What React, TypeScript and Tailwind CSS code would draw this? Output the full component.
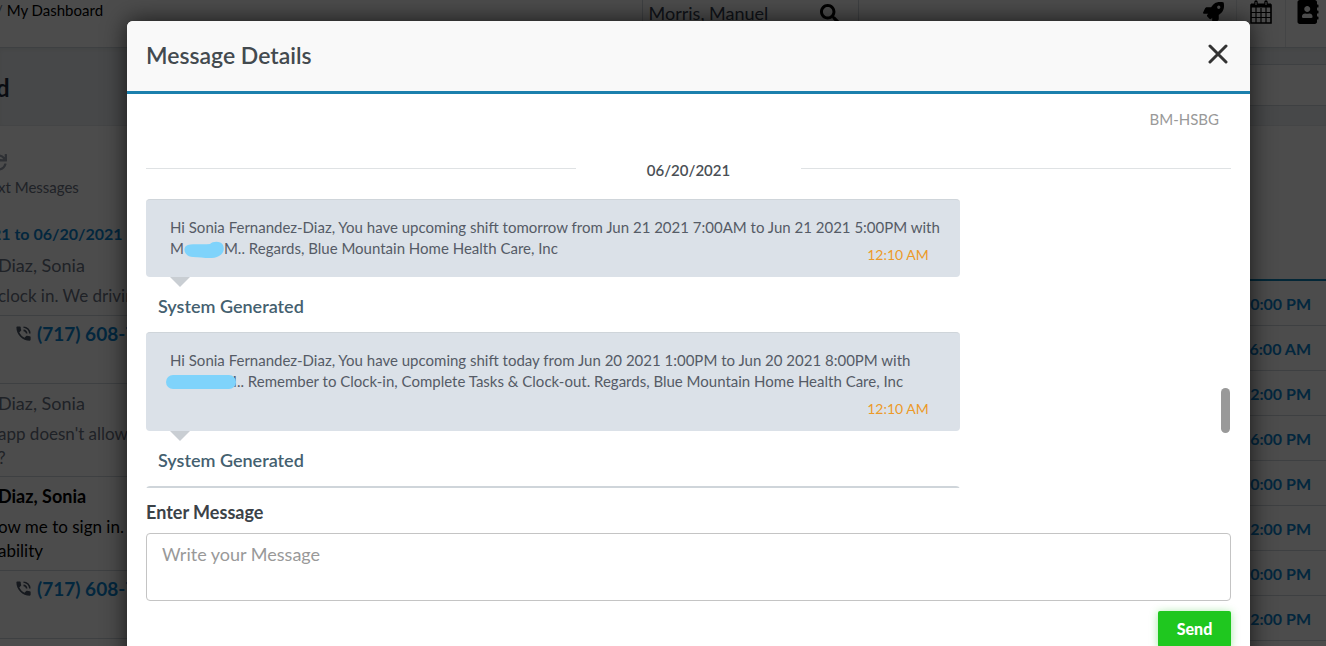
import React from 'react';
import { FaSearch, FaRocket, FaAddressBook, FaSync } from 'react-icons/fa';
import { MdPhoneInTalk } from 'react-icons/md';

const shifts = ['0:00 PM', '6:00 AM', '2:00 PM', '6:00 PM', '0:00 PM', '2:00 PM', '0:00 PM', '2:00 PM'];

const CalendarIcon: React.FC = () => (
    <svg viewBox="0 0 22 24" className="w-[22px] h-6" fill="none" stroke="currentColor">
        <path d="M1 5h20v18H1z" strokeWidth="1.6" />
        <path d="M1 5.5h20" strokeWidth="4" />
        <path d="M1 12.5h20M1 17.5h20M6 8v15M11 8v15M16 8v15" strokeWidth="1.2" />
        <path d="M6 2v4M16 2v4" strokeWidth="3.4" strokeLinecap="round" />
        <path d="M6 2v3M16 2v3" stroke="#ffffff" strokeWidth="1" />
    </svg>
);

const PhoneRow: React.FC = () => (
    <div className="h-[69px] pt-1.5 pl-4 flex items-start gap-1 border-y border-gray-300">
        <MdPhoneInTalk size={19} className="mt-0.5 text-gray-600" />
        <a href="#call" className="text-[19px] leading-6 font-bold text-[#0b84cf]">(717) 608-7</a>
    </div>
);

interface EntryProps {
    name: string;
    lines: string[];
    unread?: boolean;
}

const Entry: React.FC<EntryProps> = ({ name, lines, unread }) => (
    <div className={unread ? 'py-[7px] text-black' : 'py-[7px] text-gray-500'}>
        <div className={unread ? 'text-lg leading-6 font-bold' : 'text-lg leading-6'}>{name}</div>
        <div className="mt-[7px] text-[17px] leading-6">
            {lines.map((line) => (
                <div key={line}>{line}</div>
            ))}
        </div>
    </div>
);

const Dashboard: React.FC = () => (
    <div className="h-screen overflow-hidden bg-white whitespace-nowrap">
        <header className="h-12 flex border-b border-gray-300 text-black">
            <nav className="flex-[58] -ml-1 text-[15px] leading-5">
                <span className="text-gray-500">/</span> <a href="#dashboard">My Dashboard</a>
            </nav>
            <div className="w-[217px] px-1.5 flex border-x border-gray-300">
                <input
                    aria-label="Search patient"
                    defaultValue="Morris, Manuel"
                    className="w-[171px] h-[26px] text-lg text-gray-700 outline-none"
                />
                <button aria-label="Search" className="h-[26px]">
                    <FaSearch size={19} />
                </button>
            </div>
            <div className="flex-[42] flex justify-end">
                <button aria-label="Launch" className="w-[47px] h-6 flex justify-center items-center border-r border-gray-200">
                    <FaRocket size={21} />
                </button>
                <button aria-label="Calendar" className="w-12 h-6 flex justify-center">
                    <CalendarIcon />
                </button>
                <button aria-label="Contacts" className="w-[41px] pl-1 flex justify-center border-l border-gray-200">
                    <FaAddressBook size={24} />
                </button>
            </div>
        </header>

        <div className="h-[78px] flex bg-[#eef2f4] border-b border-gray-200 shadow-inner">
            <h1 className="flex-1 -ml-1 pt-6 text-2xl leading-8 font-bold text-gray-800">d</h1>
            <div className="w-40 h-[42px] mt-4 bg-white border-y border-gray-300" />
        </div>

        <div className="flex justify-between">
            <section className="w-40 -ml-0.5">
                <div className="h-[94px] pt-7 text-gray-500">
                    <FaSync size={17} className="-ml-2 text-gray-400" />
                    <div className="mt-1 text-[15px] leading-6">xt Messages</div>
                </div>
                <div className="h-[26px] -ml-1.5 text-base leading-7 font-bold text-[#0b84cf]">21 to 06/20/2021</div>
                <Entry name="Diaz, Sonia" lines={['clock in. We driving']} />
                <PhoneRow />
                <Entry name="Diaz, Sonia" lines={["app doesn't allow", '?']} />
                <div className="-mt-px border-t border-gray-300">
                    <Entry name="Diaz, Sonia" lines={['ow me to sign in. I', 'ability']} unread />
                </div>
                <PhoneRow />
            </section>
            <table className="w-[120px] mt-[153px] border-t-2 border-[#0b84b8] text-base font-bold text-[#0b84cf]">
                <tbody>
                    {shifts.map((time, i) => (
                        <tr key={i} className="h-[45px] border-b border-gray-300">
                            <td className="pt-0.5 pr-[15px] text-right">{time}</td>
                        </tr>
                    ))}
                </tbody>
            </table>
        </div>
    </div>
);

const Message: React.FC<{ time: string; children: React.ReactNode }> = ({ time, children }) => (
    <article>
        <div className="w-3/4 flow-root pt-[17px] pb-3 pl-6 pr-3 rounded bg-[#dbe1e8] border-t border-[#cfd5da] text-[15px] leading-[21px] text-[#555b66]">
            {children}
            <time className="float-right mt-1.5 mr-[19px] text-sm leading-[21px] text-[#ec9a29]">{time}</time>
        </div>
        <svg viewBox="0 0 20 10" className="ml-6 w-5 h-2.5 block" fill="#c9ced3">
            <path d="M0 0h20L10 10z" />
        </svg>
        <div className="ml-3 pt-[7px] pb-3.5 text-lg leading-6 font-semibold text-[#44606f]">System Generated</div>
    </article>
);

const MessageDialog: React.FC = () => (
    <div
        role="dialog"
        aria-labelledby="dialog-title"
        className="flex-1 mt-[21px] ml-[127px] mr-[76px] rounded-t-md bg-white overflow-hidden shadow-[0_0_24px_rgba(0,0,0,0.7)]"
    >
        <div className="h-[73px] px-[19px] pb-0.5 flex items-center justify-between bg-[#f9f9f9] border-b-3 border-[#1b80ad]">
            <h2 id="dialog-title" className="text-[23px] leading-8 font-semibold text-[#434a4f]">Message Details</h2>
            <button aria-label="Close" className="mr-[3px] pb-0.5">
                <svg viewBox="0 0 20 20" className="size-5" stroke="#333333" strokeWidth="3" strokeLinecap="round">
                    <path d="M2 2l16 16M18 2L2 18" />
                </svg>
            </button>
        </div>

        <div className="relative h-[394px] px-[19px] overflow-hidden">
            <div className="pt-[13px] pr-3 text-right text-[15px] leading-6 text-[#999999]">BM-HSBG</div>
            <div className="mt-7 mb-[18px] flex items-center">
                <div className="flex-1 h-px mb-1 bg-[#dfe2e4]" />
                <div className="w-[225px] text-center text-[15px] leading-[22px] font-semibold text-[#4a4f55]">06/20/2021</div>
                <div className="flex-1 h-px mb-1 bg-[#dfe2e4]" />
            </div>
            <Message time="12:10 AM">
                Hi Sonia Fernandez-Diaz, You have upcoming shift tomorrow from Jun 21 2021 7:00AM to Jun 21 2021 5:00PM with{' '}
                <span className="whitespace-nowrap">
                    M
                    <svg viewBox="0 0 40 18" className="inline-block w-10 h-[18px] -my-1 align-middle" fill="#7fd3fb">
                        <path d="M2 5C6 2 18 4 26 3C29 0 37 0 39 4C41 9 39 13 35 15C28 19 18 16 9 16C2 16-2 9 2 5Z" />
                    </svg>
                    M..
                </span>{' '}
                Regards, Blue Mountain Home Health Care, Inc
            </Message>
            <Message time="12:10 AM">
                Hi Sonia Fernandez-Diaz, You have upcoming shift today from Jun 20 2021 1:00PM to Jun 20 2021 8:00PM with{' '}
                <span className="relative inline-block pl-[53px] whitespace-nowrap">
                    M..
                    <svg viewBox="0 0 70 14" className="absolute -left-1 top-1 w-[70px] h-3.5" fill="#7fd3fb">
                        <rect width="70" height="14" rx="7" />
                    </svg>
                </span>{' '}
                Remember to Clock-in, Complete Tasks & Clock-out. Regards, Blue Mountain Home Health Care, Inc
            </Message>
            <div className="w-3/4 h-20 rounded bg-[#dbe1e8] border-t-2 border-[#cfd5da]" />
            {/* scroll thumb */}
            <div className="absolute right-5 top-[294px] w-[9px] h-[45px] rounded-full bg-[#999999]" />
        </div>

        <form className="px-[19px] pt-3" onSubmit={(e) => e.preventDefault()}>
            <label htmlFor="message" className="block text-lg leading-6 font-bold text-[#3b4247]">Enter Message</label>
            <textarea
                id="message"
                placeholder="Write your Message"
                className="block w-full h-[68px] mt-[9px] px-[15px] py-2 resize-none rounded border border-[#c4c4c4] text-lg leading-6 outline-none placeholder:text-[#999999]"
            />
            <div className="mt-2.5 pb-5 flex justify-end">
                <button className="w-[73px] h-9 rounded-xs bg-[#1fc71f] text-base font-black text-white shadow-[0_1px_8px_rgba(31,199,31,0.4)]">
                    Send
                </button>
            </div>
        </form>
    </div>
);

export default function App() {
    return (
        <div className="relative h-screen overflow-hidden font-['Lato',sans-serif]">
            <Dashboard />
            <div className="absolute inset-0 flex items-start bg-black/70">
                <MessageDialog />
            </div>
        </div>
    );
}
